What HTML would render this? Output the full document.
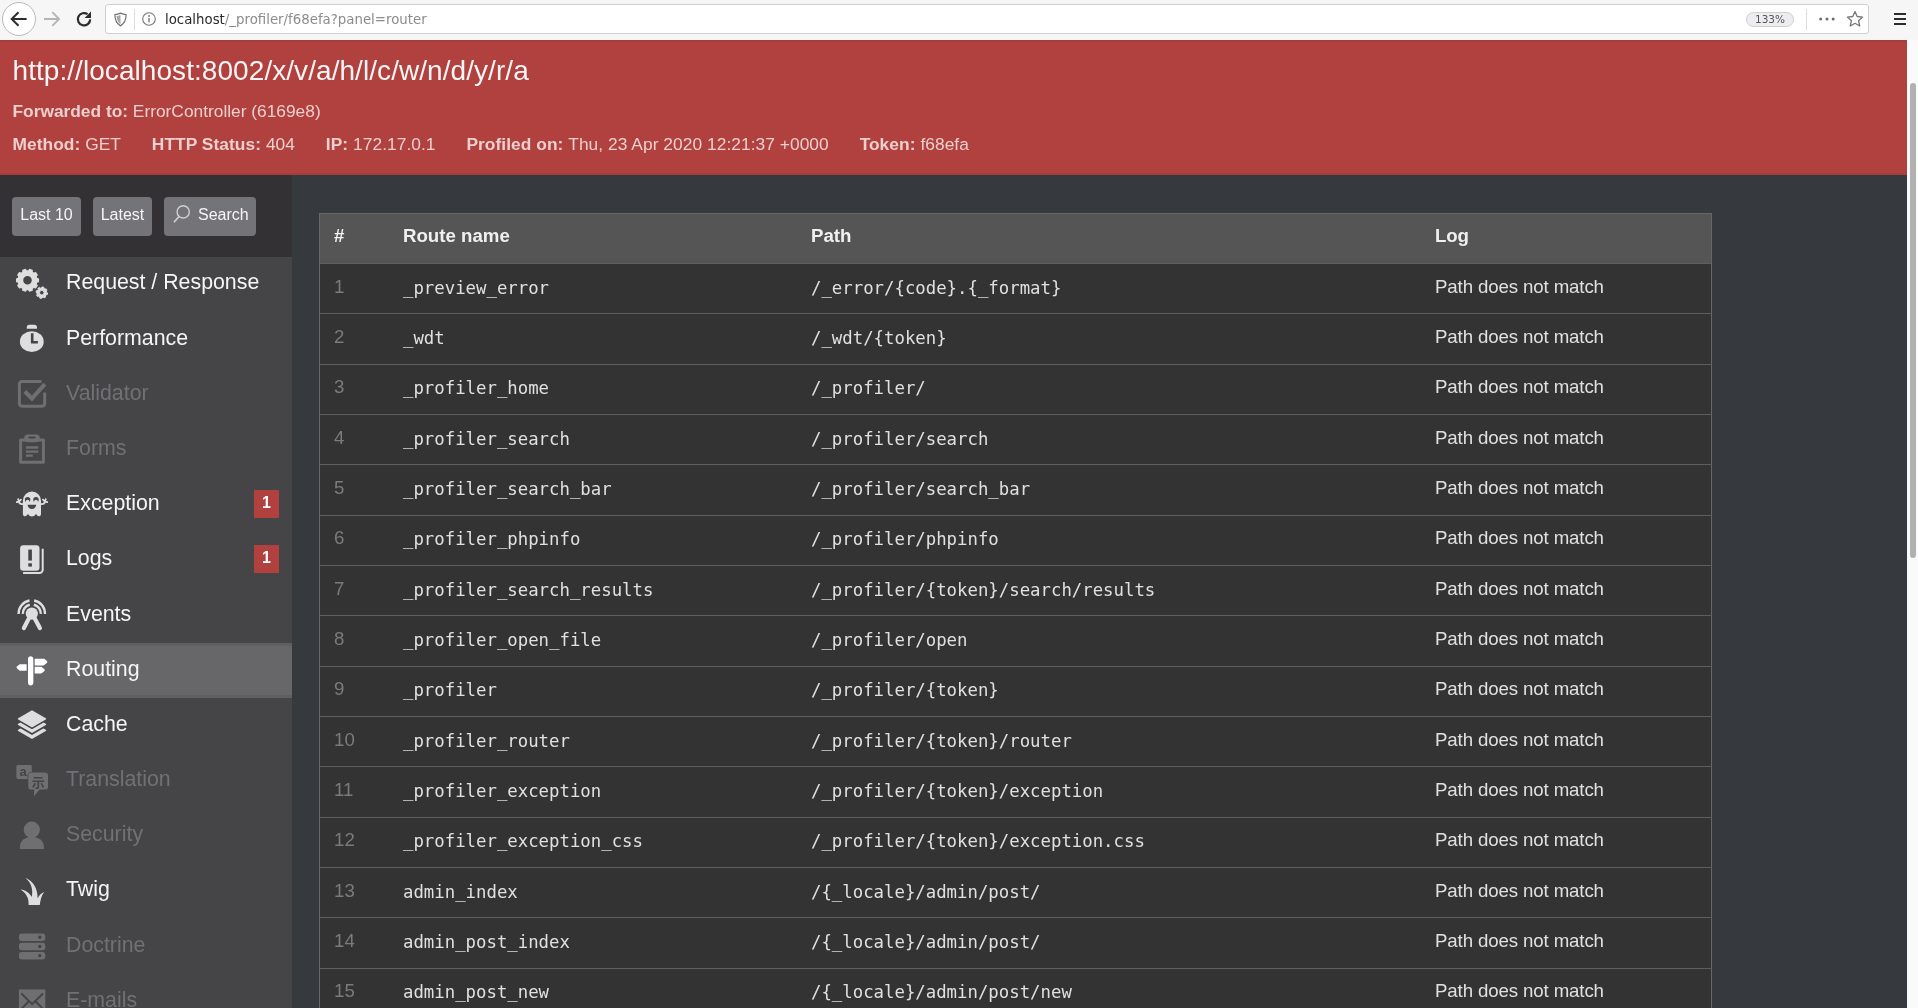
<!DOCTYPE html>
<html lang="en"><head><meta charset="utf-8"><title>Symfony Profiler</title>
<style>
*{box-sizing:border-box}
html,body{margin:0;padding:0}
body{will-change:transform;width:1918px;height:1008px;overflow:hidden;background:#36393e;position:relative;font-family:"Liberation Sans",sans-serif;color:#e0e0e0}
#chrome{position:absolute;left:0;top:0;width:1918px;height:40px;background:#f6f6f6}
#summary{position:absolute;left:0;top:40px;width:1907px;height:135px;background:#b0413e;border-top:2px solid #a53d3a;border-bottom:2px solid #a53d3a}
#summary .status{padding:0 0 0 13px}
#summary h2{margin:0;font-weight:normal;font-size:28px;line-height:34px;color:#f5f5f5;position:absolute;left:12.5px;top:11.5px;white-space:nowrap;letter-spacing:0.06px}
dl.metadata{margin:0;position:absolute;left:12.5px;top:90px;letter-spacing:0.058px;font-size:17.33px;line-height:24px;color:rgba(255,255,255,.75);white-space:nowrap}
dl.metadata.fwd{top:57px;letter-spacing:0}
dl.metadata dt{display:inline-block;font-weight:bold}
dl.metadata dd{display:inline-block;margin:0 26px 0 0}
#sidebar{position:absolute;left:0;top:175px;width:292px;height:833px;background:#454447}
#shortcuts{position:absolute;left:0;top:0;width:292px;height:82px;background:#333134}
.btn{position:absolute;top:22px;height:39px;background:#747377;border-radius:4px;color:#f5f5f5;font-size:16px;line-height:35px;text-align:center;white-space:nowrap}
.b1{left:12px;width:69px}.b2{left:93px;width:59px}.b3{left:164px;width:92px}
#menu{list-style:none;margin:0;padding:0;position:absolute;left:0;top:82px;width:292px}
#menu li{position:absolute;left:0;width:292px;color:#f5f5f5;font-size:21.33px}
#menu li .icon{position:absolute;left:16px;width:32px;height:32px;color:#dedede}
#menu li.disabled .icon{color:#6f6e71}
#menu li.selected .icon{color:#fff}
#menu li .icon svg{width:32px;height:32px;display:block}
#menu li .label{position:absolute;left:66px;line-height:24px;white-space:nowrap}
#menu li.disabled{color:#717073}
#menu li.selected{background:#676669;box-shadow:inset 0 3px 0 #5f5e61,inset 0 -3px 0 #5f5e61}
#menu li .count{position:absolute;left:254px;width:25px;height:28px;background:#b0413e;color:#fff;font-weight:bold;font-size:16px;line-height:25px;text-align:center}
#tbl{position:absolute;left:319px;top:213px;width:1393px;height:800px;background:#333;border:1px solid #666}
.tr{position:absolute;left:0;width:1391px;border-bottom:1px solid #5f5f5f;font-size:18.67px}
.tr.th{background:#555;font-weight:bold;color:#f0f0f0}
.tr span{position:absolute;top:var(--s);line-height:24px;white-space:nowrap}
.c1{left:14px;color:#7b7b7b}
.th .c1{color:#f0f0f0}
.c2{left:83px}.c3{left:491px}.c4{left:1115px}
.tr .c2,.tr .c3{font-family:"DejaVu Sans Mono",monospace;font-size:17.33px;top:var(--m)}
.tr .c4{letter-spacing:-0.12px}
.tr.th .c2,.tr.th .c3{font-family:"Liberation Sans",sans-serif;font-size:18.67px;top:var(--s)}
#scroll{position:absolute;left:1907px;top:40px;width:11px;height:968px;background:#fafafa}
#thumb{position:absolute;left:3px;top:43px;width:6px;height:475px;border-radius:3px;background:#b1b1b1}
#back{position:absolute;left:2px;top:2px;width:34px;height:34px;border-radius:50%;background:#fff;border:1px solid #b9b9bb}
#back svg{position:absolute;left:-1px;top:-1px}
#fwd{position:absolute;left:42px;top:9px}
#reload{position:absolute;left:74px;top:9px}
#urlbar{position:absolute;left:105px;top:4px;width:1764px;height:30px;background:#fff;border:1px solid #cfcfd1;border-radius:3px}
#shield{position:absolute;left:6.5px;top:6.5px}
#sep1{position:absolute;left:28px;top:4px;width:1px;height:21px;background:#dcdcde}
#info{position:absolute;left:35px;top:6px}
#url{position:absolute;left:59px;top:0;line-height:30px;font-family:"DejaVu Sans","Liberation Sans",sans-serif;font-size:13.33px;color:#8c8c90;white-space:nowrap}
#url b{font-weight:normal;color:#2a2a2e}
#zoom{position:absolute;left:1640px;top:7px;width:48px;height:15px;border-radius:8px;background:#ededf0;border:1px solid #d0d0d3;font-family:"DejaVu Sans","Liberation Sans",sans-serif;font-size:10.500px;line-height:13px;text-align:center;color:#55555a}
#sep2{position:absolute;left:1700px;top:4px;width:1px;height:21px;background:#dcdcde}
#dots{position:absolute;left:1712px;top:11px}
#star{position:absolute;left:1740px;top:5px}
#burger{position:absolute;left:1894px;top:13px;width:12px;height:12px}
#burger i{display:block;height:2px;background:#2b2b30;margin-bottom:3px}
.b3 svg{position:absolute;left:5.5px;top:7.2px;width:21px;height:21px;color:#d0d0d0}
.b3 span{position:absolute;left:34px;top:0}

</style></head>
<body>
<div id="chrome">
<div id="back"><svg viewBox="0 0 34 34" width="34" height="34"><path d="M24.600,17 H10.500 M16.500,10.200 L9.700,17 L16.500,23.800" fill="none" stroke="#2b2b30" stroke-width="2" stroke-linejoin="miter"/></svg></div>
<svg id="fwd" viewBox="0 0 20 20" width="20" height="20"><path d="M2,10 H16.500 M10.300,3.200 L17.100,10 L10.300,16.800" fill="none" stroke="#b4b4b6" stroke-width="1.800"/></svg>
<svg id="reload" viewBox="0 0 20 20" width="20" height="20"><path d="M16.200,10.400 A6.200,6.200 0 1 1 13.600,5.200" fill="none" stroke="#2b2b30" stroke-width="2.200"/><path d="M17,2.600 V9 H10.600Z" fill="#2b2b30"/></svg>
<div id="urlbar">
<svg id="shield" viewBox="0 0 16 16" width="15" height="15"><path d="M8,1.200 C10,2.200 12,2.600 14,2.700 C14,8.500 12,12.500 8,14.800 C4,12.500 2,8.500 2,2.700 C4,2.600 6,2.200 8,1.200Z" fill="none" stroke="#737377" stroke-width="1.300" stroke-linejoin="round"/><path d="M8,3.200 C6.600,3.900 5.200,4.200 3.800,4.300 C3.900,8.300 5.300,11.200 8,13Z" fill="#a9a9ad"/></svg>
<span id="sep1"></span>
<svg id="info" viewBox="0 0 16 16" width="16" height="16"><circle cx="8" cy="8" r="6.300" fill="none" stroke="#77777b" stroke-width="1.100"/><rect x="7.300" y="7" width="1.400" height="4.300" fill="#77777b"/><circle cx="8" cy="5" r="0.900" fill="#77777b"/></svg>
<span id="url"><b>localhost</b>/_profiler/f68efa?panel=router</span>
<span id="zoom">133%</span>
<span id="sep2"></span>
<svg id="dots" viewBox="0 0 18 6" width="18" height="6"><circle cx="2.700" cy="3" r="1.500" fill="#6e6e72"/><circle cx="9" cy="3" r="1.500" fill="#6e6e72"/><circle cx="15.200" cy="3" r="1.500" fill="#6e6e72"/></svg>
<svg id="star" viewBox="0 0 18 18" width="18" height="18"><path d="M9,1.600 L11.200,6.500 L16.600,7.100 L12.600,10.700 L13.700,16 L9,13.300 L4.300,16 L5.400,10.700 L1.400,7.100 L6.800,6.500Z" fill="none" stroke="#77777b" stroke-width="1.300" stroke-linejoin="round"/></svg>
</div>
<div id="burger"><i></i><i></i><i></i></div>
</div>
<div id="summary"><div class="status">
<h2>http://localhost:8002/x/v/a/h/l/c/w/n/d/y/r/a</h2>
<dl class="metadata fwd"><dt>Forwarded to:</dt> <dd>ErrorController (6169e8)</dd></dl>
<dl class="metadata"><dt>Method:</dt> <dd>GET</dd> <dt>HTTP Status:</dt> <dd>404</dd> <dt>IP:</dt> <dd>172.17.0.1</dd> <dt>Profiled on:</dt> <dd>Thu, 23 Apr 2020 12:21:37 +0000</dd> <dt>Token:</dt> <dd>f68efa</dd></dl>
</div></div>
<div id="sidebar">
<div id="shortcuts"><a class="btn b1">Last 10</a><a class="btn b2">Latest</a><a class="btn b3"><svg viewBox="0 0 21 21"><g><circle cx="13.2" cy="7.900" r="6.100" fill="none" stroke="currentColor" stroke-width="1.400"/><path d="M9,12.500 L4,18.200" stroke="currentColor" stroke-width="1.700" fill="none"/></g></svg><span>Search</span></a></div>
<ul id="menu">
<li class="" style="top:0px;height:55px"><span class="icon" style="top:11px"><svg viewBox="0 0 32 32"><g transform="translate(0,0.57)"><path fill="currentColor" fill-rule="evenodd" stroke="currentColor" stroke-width="1.5" stroke-linejoin="round" d="M20.64,9.96 L22.31,10.33 L22.31,13.07 L20.64,13.44 L19.91,15.66 L21.05,16.95 L19.45,19.16 L17.87,18.48 L15.98,19.85 L16.14,21.56 L13.54,22.41 L12.67,20.93 L10.33,20.93 L9.46,22.41 L6.86,21.56 L7.02,19.85 L5.13,18.48 L3.55,19.16 L1.95,16.95 L3.09,15.66 L2.36,13.44 L0.69,13.07 L0.69,10.33 L2.36,9.96 L3.09,7.74 L1.95,6.45 L3.55,4.24 L5.13,4.92 L7.02,3.55 L6.86,1.84 L9.46,0.99 L10.33,2.47 L12.67,2.47 L13.54,0.99 L16.14,1.84 L15.98,3.55 L17.87,4.92 L19.45,4.24 L21.05,6.45 L19.91,7.74Z M6.50,11.70 a5.00,5.00 0 1 0 10.00,0 a5.00,5.00 0 1 0 -10.00,0Z"/><path fill="currentColor" fill-rule="evenodd" stroke="currentColor" stroke-width="1" stroke-linejoin="round" d="M30.60,23.93 L31.59,24.35 L31.23,26.13 L30.15,26.13 L29.31,27.37 L29.72,28.37 L28.21,29.38 L27.44,28.61 L25.97,28.90 L25.55,29.89 L23.77,29.53 L23.77,28.45 L22.53,27.61 L21.53,28.02 L20.52,26.51 L21.29,25.74 L21.00,24.27 L20.01,23.85 L20.37,22.07 L21.45,22.07 L22.29,20.83 L21.88,19.83 L23.39,18.82 L24.16,19.59 L25.63,19.30 L26.05,18.31 L27.83,18.67 L27.83,19.75 L29.07,20.59 L30.07,20.18 L31.08,21.69 L30.31,22.46Z M23.50,24.10 a2.30,2.30 0 1 0 4.60,0 a2.30,2.30 0 1 0 -4.60,0Z"/></g></svg></span><span class="label" style="top:13px">Request / Response</span></li>
<li class="" style="top:55px;height:55px"><span class="icon" style="top:11px"><svg viewBox="0 0 32 32"><g transform="translate(0,0.75)"><ellipse cx="15.8" cy="17.9" rx="11.9" ry="10.3" fill="currentColor"/><path d="M10.8,4.9 V3.6 a2.6,2.6 0 0 1 2.6,-2.6 h5 a2.6,2.6 0 0 1 2.6,2.6 V4.9Z" fill="currentColor"/><path d="M16.2,9.6 V18.5 H21.9" fill="none" stroke="#454447" stroke-width="2.6"/></g></svg></span><span class="label" style="top:14px">Performance</span></li>
<li class="disabled" style="top:110px;height:56px"><span class="icon" style="top:11px"><svg viewBox="0 0 32 32"><g transform="translate(0,0.94)"><path d="M25.5,2.6 H6 a2.6,2.6 0 0 0 -2.6,2.6 V24.6 a2.6,2.6 0 0 0 2.6,2.6 H26.1 a2.6,2.6 0 0 0 2.6,-2.6 V13.6" fill="none" stroke="currentColor" stroke-width="3"/><path d="M8.8,12.6 L15.9,19.6 L28.9,5.2" fill="none" stroke="currentColor" stroke-width="4"/></g></svg></span><span class="label" style="top:14px">Validator</span></li>
<li class="disabled" style="top:166px;height:55px"><span class="icon" style="top:11px"><svg viewBox="0 0 32 32"><g transform="translate(0,0.11)"><path d="M4.6,6 H27.4 V28.2 H4.6Z" fill="none" stroke="currentColor" stroke-width="3" stroke-linejoin="round"/><rect x="8.2" y="0.5" width="15.6" height="7.6" rx="3.6" fill="currentColor"/><rect x="12.4" y="2.5" width="7.2" height="1.9" rx="0.9" fill="#454447"/><path d="M9.9,13.4 H22.3 M9.9,17.5 H22.3 M9.9,21.5 H16.8" stroke="currentColor" stroke-width="2.4" fill="none"/></g></svg></span><span class="label" style="top:13px">Forms</span></li>
<li class="" style="top:221px;height:55px"><span class="icon" style="top:11px"><svg viewBox="0 0 32 32"><g transform="translate(0,0.30)"><path fill="currentColor" d="M6.9,11.2 a9.05,9 0 0 1 18.1,0 V24.6 c0,2.8 -3.4,3 -4.3,0.9 c-0.3,-0.7 -1.2,-0.7 -1.5,0 c-0.9,2.1 -5.6,2.1 -6.5,0 c-0.3,-0.7 -1.2,-0.7 -1.5,0 C10.3,27.6 6.9,27.4 6.9,24.6Z"/><path fill="none" stroke="currentColor" stroke-width="1.8" stroke-linecap="round" d="M7.4,14.6 C5,15.2 3.4,14.2 2.8,12.4 M2.9,12.4 L0.6,12.9 M3,12.2 L2.2,9.9 M3.2,12.2 L4.9,10.4 M24.5,14.6 C26.9,15.2 28.5,14.2 29.1,12.4 M29,12.4 L31.3,12.9 M28.9,12.2 L29.7,9.9 M28.7,12.2 L27,10.4"/><circle cx="11.6" cy="10.4" r="2.7" fill="#454447"/><circle cx="20" cy="10.4" r="2.7" fill="#454447"/><circle cx="11.6" cy="12.3" r="1.9" fill="currentColor"/><circle cx="20" cy="12.3" r="1.9" fill="currentColor"/><path d="M11.6,15.4 H20.2 a4.3,4.2 0 0 1 -8.6,0Z" fill="#454447"/></g></svg></span><span class="label" style="top:13px">Exception</span><span class="count" style="top:12px">1</span></li>
<li class="" style="top:276px;height:55px"><span class="icon" style="top:11px"><svg viewBox="0 0 32 32"><g transform="translate(0,0.48)"><rect x="4.1" y="0.7" width="19.4" height="25.5" rx="3.2" fill="currentColor"/><path d="M26.7,4.2 V25.3 a3.2,3.2 0 0 1 -3.2,3.2 H7.1" fill="none" stroke="currentColor" stroke-width="2"/><rect x="12.3" y="5.1" width="3.6" height="11" fill="#454447"/><rect x="12.3" y="18.8" width="3.6" height="3.3" fill="#454447"/></g></svg></span><span class="label" style="top:13px">Logs</span><span class="count" style="top:12px">1</span></li>
<li class="" style="top:331px;height:55px"><span class="icon" style="top:11px"><svg viewBox="0 0 32 32"><g transform="translate(0,0.65)"><circle cx="15.8" cy="13.9" r="6.1" fill="currentColor"/><path d="M14.6,15.5 L7.9,28.4 M17,15.5 L23.9,28.4" stroke="currentColor" stroke-width="4.2" stroke-linecap="round" fill="none"/><path d="M6.81,14.21 A9.00,9.00 0 0 1 13.78,5.13 M17.82,5.13 A9.00,9.00 0 0 1 24.79,14.21 M2.61,14.36 A13.20,13.20 0 0 1 13.51,0.90 M18.09,0.90 A13.20,13.20 0 0 1 28.99,14.36" stroke="currentColor" stroke-width="2.4" fill="none"/></g></svg></span><span class="label" style="top:14px">Events</span></li>
<li class="selected" style="top:386px;height:55px"><span class="icon" style="top:11px"><svg viewBox="0 0 24 24"><g transform="translate(0,0.63)"><path fill="currentColor" d="M13,3v18c0,1.1-0.9,2-2,2s-2-0.9-2-2V3c0-1.1,0.9-2,2-2S13,1.900,13,3z M23.200,4.600l-1.800-1.400C21.200,2.900,20.800,3,20.400,3h-1.300H14v2.100V8h5.100h1.300c0.400,0,0.800-0.300,1.100-0.500l1.800-1.600C23.600,5.600,23.600,4.900,23.200,4.600z M19.500,9.400C19.200,9.100,18.800,9,18.400,9h-0.300H14v2.600V14h4.100h0.300c0.400,0,0.800-0.100,1.100-0.300l1.800-1.500c0.400-0.300,0.400-0.900,0-1.300L19.500,9.400z M3.500,7C3.100,7,2.800,7,2.500,7.300L0.700,8.800c-0.400,0.300-0.400,0.900,0,1.300l1.800,1.600C2.800,11.900,3.100,12,3.500,12h0.300H8V9.400V7H3.900H3.500z"/></g></svg></span><span class="label" style="top:14px">Routing</span></li>
<li class="" style="top:441px;height:56px"><span class="icon" style="top:12px"><svg viewBox="0 0 32 32"><g transform="translate(0,0.02)"><path d="M2.60,20.40 L16.00,12.66 L29.40,20.40 L16.00,28.14Z" fill="currentColor" stroke="currentColor" stroke-width="1.6" stroke-linejoin="round"/><path d="M2.60,16.40 L16.00,8.66 L29.40,16.40 L16.00,24.14Z" fill="#454447" stroke="#454447" stroke-width="1.6" stroke-linejoin="round"/><path d="M2.60,14.40 L16.00,6.66 L29.40,14.40 L16.00,22.14Z" fill="currentColor" stroke="currentColor" stroke-width="1.6" stroke-linejoin="round"/><path d="M2.60,10.50 L16.00,2.76 L29.40,10.50 L16.00,18.24Z" fill="#454447" stroke="#454447" stroke-width="1.6" stroke-linejoin="round"/><path d="M2.60,8.80 L16.00,1.06 L29.40,8.80 L16.00,16.54Z" fill="currentColor" stroke="currentColor" stroke-width="1.6" stroke-linejoin="round"/></g></svg></span><span class="label" style="top:14px">Cache</span></li>
<li class="disabled" style="top:497px;height:55px"><span class="icon" style="top:11px"><svg viewBox="0 0 32 32"><g transform="translate(0,0.20)"><path d="M2,-0.4 H14.2 a1.6,1.6 0 0 1 1.6,1.6 V18.2 L10.8,13.7 H2 a1.6,1.6 0 0 1 -1.6,-1.6 V1.2 a1.6,1.6 0 0 1 1.6,-1.6Z" fill="currentColor"/><path d="M15.200,7.400 H29.200 a2.900,2.900 0 0 1 2.900,2.900 V21.500 a2.900,2.900 0 0 1 -2.900,2.900 H23.800 L18,31 V24.400 H15.200 a2.900,2.900 0 0 1 -2.900,-2.900 V10.300 a2.900,2.900 0 0 1 2.900,-2.900Z" fill="currentColor" stroke="#454447" stroke-width="1.400" paint-order="stroke"/><text x="3.600" y="11.200" font-family="Liberation Sans, sans-serif" font-weight="bold" font-size="13" fill="#454447">a</text><text x="15.800" y="22.200" font-family="Noto Sans CJK SC, Noto Sans CJK JP, sans-serif" font-weight="bold" font-size="13" fill="#454447">示</text></g></svg></span><span class="label" style="top:13px">Translation</span></li>
<li class="disabled" style="top:552px;height:55px"><span class="icon" style="top:11px"><svg viewBox="0 0 32 32"><g transform="translate(0,0.38)"><circle cx="15.8" cy="9.3" r="8.1" fill="currentColor"/><path d="M3.9,28.600 V26.500 C3.900,20.500 9,16.300 15.900,16.300 S27.900,20.500 27.900,26.500 V28.600Z" fill="currentColor"/></g></svg></span><span class="label" style="top:13px">Security</span></li>
<li class="" style="top:607px;height:55px"><span class="icon" style="top:11px"><svg viewBox="0 0 32 32"><g transform="translate(0,0.56)"><path fill="currentColor" d="M12.6,29.500 C12.900,24 11.500,18.500 4.600,14 C9.500,14.500 13.600,17.500 15.800,21.500 C17.200,14 15.500,7 9.200,2.200 C17.500,5.500 21.800,13.500 21.600,22.800 C23.200,19.500 25.300,17.300 28.400,16.400 C25.500,19.500 24.400,24 23.800,29.500Z"/></g></svg></span><span class="label" style="top:13px">Twig</span></li>
<li class="disabled" style="top:662px;height:55px"><span class="icon" style="top:11px"><svg viewBox="0 0 32 32"><g transform="translate(0,0.74)"><rect x="2.9" y="2.8" width="26.4" height="7.5" rx="3" fill="currentColor"/><circle cx="23.8" cy="6.5" r="1.7" fill="#454447"/><rect x="2.9" y="11.9" width="26.4" height="7.5" rx="3" fill="currentColor"/><circle cx="23.8" cy="15.7" r="1.7" fill="#454447"/><rect x="2.9" y="21.2" width="26.4" height="7.5" rx="3" fill="currentColor"/><circle cx="23.8" cy="24.9" r="1.7" fill="#454447"/></g></svg></span><span class="label" style="top:14px">Doctrine</span></li>
<li class="disabled" style="top:717px;height:56px"><span class="icon" style="top:11px"><svg viewBox="0 0 32 32"><g transform="translate(0,0.92)"><rect x="2.9" y="3.500" width="26.400" height="22" fill="currentColor"/><path d="M5.400,7.500 L16.100,18.200 L27,7.500 M5.400,23 L12.300,15.800 M27,23 L20,15.800" stroke="#454447" stroke-width="2" fill="none"/></g></svg></span><span class="label" style="top:14px">E-mails</span></li>
</ul>
</div>
<div id="tbl">
<div class="tr th" style="top:0;height:50px;--s:10px;--m:10px"><span class="c1">#</span><span class="c2">Route name</span><span class="c3">Path</span><span class="c4">Log</span></div>
<div class="tr" style="top:50px;height:50px;--s:11px;--m:12px"><span class="c1">1</span><span class="c2">_preview_error</span><span class="c3">/_error/{code}.{_format}</span><span class="c4">Path does not match</span></div>
<div class="tr" style="top:100px;height:51px;--s:11px;--m:12px"><span class="c1">2</span><span class="c2">_wdt</span><span class="c3">/_wdt/{token}</span><span class="c4">Path does not match</span></div>
<div class="tr" style="top:151px;height:50px;--s:10px;--m:11px"><span class="c1">3</span><span class="c2">_profiler_home</span><span class="c3">/_profiler/</span><span class="c4">Path does not match</span></div>
<div class="tr" style="top:201px;height:50px;--s:11px;--m:12px"><span class="c1">4</span><span class="c2">_profiler_search</span><span class="c3">/_profiler/search</span><span class="c4">Path does not match</span></div>
<div class="tr" style="top:251px;height:51px;--s:11px;--m:12px"><span class="c1">5</span><span class="c2">_profiler_search_bar</span><span class="c3">/_profiler/search_bar</span><span class="c4">Path does not match</span></div>
<div class="tr" style="top:302px;height:50px;--s:10px;--m:11px"><span class="c1">6</span><span class="c2">_profiler_phpinfo</span><span class="c3">/_profiler/phpinfo</span><span class="c4">Path does not match</span></div>
<div class="tr" style="top:352px;height:50px;--s:11px;--m:12px"><span class="c1">7</span><span class="c2">_profiler_search_results</span><span class="c3">/_profiler/{token}/search/results</span><span class="c4">Path does not match</span></div>
<div class="tr" style="top:402px;height:51px;--s:11px;--m:12px"><span class="c1">8</span><span class="c2">_profiler_open_file</span><span class="c3">/_profiler/open</span><span class="c4">Path does not match</span></div>
<div class="tr" style="top:453px;height:50px;--s:10px;--m:11px"><span class="c1">9</span><span class="c2">_profiler</span><span class="c3">/_profiler/{token}</span><span class="c4">Path does not match</span></div>
<div class="tr" style="top:503px;height:50px;--s:11px;--m:12px"><span class="c1">10</span><span class="c2">_profiler_router</span><span class="c3">/_profiler/{token}/router</span><span class="c4">Path does not match</span></div>
<div class="tr" style="top:553px;height:51px;--s:11px;--m:12px"><span class="c1">11</span><span class="c2">_profiler_exception</span><span class="c3">/_profiler/{token}/exception</span><span class="c4">Path does not match</span></div>
<div class="tr" style="top:604px;height:50px;--s:10px;--m:11px"><span class="c1">12</span><span class="c2">_profiler_exception_css</span><span class="c3">/_profiler/{token}/exception.css</span><span class="c4">Path does not match</span></div>
<div class="tr" style="top:654px;height:50px;--s:11px;--m:12px"><span class="c1">13</span><span class="c2">admin_index</span><span class="c3">/{_locale}/admin/post/</span><span class="c4">Path does not match</span></div>
<div class="tr" style="top:704px;height:51px;--s:11px;--m:12px"><span class="c1">14</span><span class="c2">admin_post_index</span><span class="c3">/{_locale}/admin/post/</span><span class="c4">Path does not match</span></div>
<div class="tr" style="top:755px;height:50px;--s:10px;--m:11px"><span class="c1">15</span><span class="c2">admin_post_new</span><span class="c3">/{_locale}/admin/post/new</span><span class="c4">Path does not match</span></div>
</div>
<div id="scroll"><div id="thumb"></div></div>
</body></html>
